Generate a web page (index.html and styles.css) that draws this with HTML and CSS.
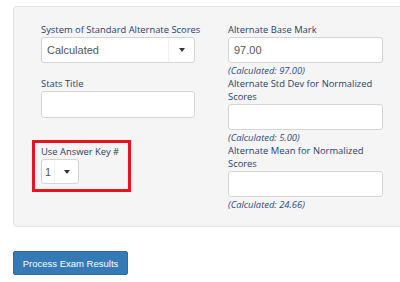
FILE: index.html
```html
<!DOCTYPE html>
<html>
<head>
<meta charset="utf-8">
<link rel="stylesheet" href="styles.css">
</head>
<body>
<div class="well">
  <div class="grid">
    <div class="col">
      <label class="lbl">System of Standard Alternate Scores</label>
      <div class="select wide">
        <span class="val">Calculated</span>
        <span class="caret-box"><span class="caret"></span></span>
      </div>
      <label class="lbl lbl-gap">Stats Title</label>
      <div class="input"></div>
      <div class="highlight">
        <label class="lbl">Use Answer Key #</label>
        <div class="select small">
          <span class="val">1</span>
          <span class="caret-box"><span class="caret"></span></span>
        </div>
      </div>
    </div>
    <div class="col">
      <label class="lbl">Alternate Base Mark</label>
      <div class="input"><span class="val">97.00</span></div>
      <div class="calc">(Calculated: 97.00)</div>
      <label class="lbl">Alternate Std Dev for Normalized Scores</label>
      <div class="input"></div>
      <div class="calc">(Calculated: 5.00)</div>
      <label class="lbl">Alternate Mean for Normalized Scores</label>
      <div class="input"></div>
      <div class="calc">(Calculated: 24.66)</div>
    </div>
  </div>
</div>
<button class="btn">Process Exam Results</button>
</body>
</html>
```
FILE: styles.css
```css
html, body {
  margin: 0;
  padding: 0;
  background: #fff;
  width: 400px;
  height: 282px;
  overflow: hidden;
}
body {
  padding: 6px 0 0 13px;
  box-sizing: border-box;
  font-family: "Open Sans", sans-serif;
}
.well {
  width: 420px;
  height: 221px;
  box-sizing: border-box;
  background: #f5f5f5;
  border: 1px solid #e3e3e3;
  border-radius: 4px;
  padding: 16px 0 0 27px;
}
.grid {
  display: grid;
  grid-template-columns: 154px 155px;
  column-gap: 33px;
}
.col {
  display: flex;
  flex-direction: column;
  align-items: flex-start;
}
.lbl {
  display: block;
  font-size: 9.4px;
  line-height: 13px;
  color: #2b3d6d;
  width: 170px;
  white-space: normal;
}
.col:nth-child(2) .lbl { width: 155px; }
.lbl-gap { margin-top: 14px; }
.select, .input {
  box-sizing: border-box;
  background: #fff;
  border: 1px solid #d4d4d4;
  border-radius: 3px;
  display: flex;
  align-items: center;
  font-family: "Liberation Sans", Arial, sans-serif;
  font-size: 11px;
  color: #555;
  margin-top: 1px;
}
.input {
  width: 155px;
  height: 26px;
  padding-left: 5px;
}
.col:first-child .input { width: 154px; height: 27px; }
.select.wide {
  width: 154px;
  height: 26px;
}
.select .val {
  flex: 1;
  padding-left: 5px;
}
.caret-box {
  height: 100%;
  display: flex;
  align-items: center;
  justify-content: center;
  border-left: 1px solid #f0f0f0;
}
.wide .caret-box { width: 25px; }
.caret {
  width: 0;
  height: 0;
  border-left: 3px solid transparent;
  border-right: 3px solid transparent;
  border-top: 4px solid #333;
}
.highlight {
  margin: 22px 0 0 -9px;
  width: 99px;
  height: 52px;
  box-sizing: border-box;
  border: 3px solid #e5141e;
  padding: 2px 0 0 6px;
}
.select.small {
  width: 38px;
  height: 25px;
}
.small .val { padding-left: 3px; flex: 0 0 9px; }
.small .caret-box { flex: 1; }
.calc {
  font-size: 9.4px;
  line-height: 13px;
  font-style: italic;
  color: #2c4a80;
  margin-top: 1px;
}
.btn {
  display: block;
  margin-top: 24px;
  width: 115px;
  height: 24px;
  background: #337ab7;
  border: 1px solid #2e6da4;
  border-radius: 2px;
  color: #fff;
  font-family: "Liberation Sans", Arial, sans-serif;
  font-size: 9.5px;
  padding: 0;
}
```
